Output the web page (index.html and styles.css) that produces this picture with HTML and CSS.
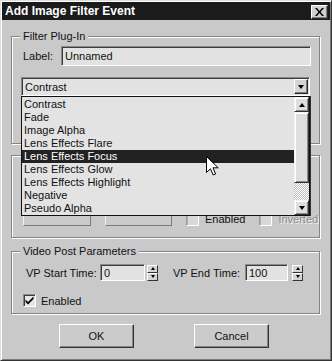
FILE: index.html
```html
<!DOCTYPE html>
<html lang="en">
<head>
    <meta charset="UTF-8">
    <title>Add Image Filter Event</title>
    <link rel="stylesheet" href="styles.css">
</head>
<body>
    <div class="dialog">
        <div class="titlebar">
            <span class="title">Add Image Filter Event</span>
            <button class="close" aria-label="Close">
                <svg width="9" height="8" viewBox="0 0 9 8"><path d="M0 0h2l2.5 3 2.5-3h2L5.5 4 9 8H7L4.5 5 2 8H0l3.5-4z" fill="#000"/></svg>
            </button>
        </div>
        <div class="dialog-body">
            <div class="group group-plugin">
                <div class="group-title">Filter Plug-In</div>
                <div class="label-row">
                    <span class="label">Label:</span>
                    <div class="field field-label">Unnamed</div>
                </div>
                <div class="combo-wrap">
                    <div class="combo">
                        <div class="combo-value">Contrast</div>
                        <div class="combo-btn"><span class="tri-down"></span></div>
                    </div>
                    <div class="combo-list">
                        <ul class="items">
                            <li>Contrast</li>
                            <li>Fade</li>
                            <li>Image Alpha</li>
                            <li>Lens Effects Flare</li>
                            <li class="selected">Lens Effects Focus</li>
                            <li>Lens Effects Glow</li>
                            <li>Lens Effects Highlight</li>
                            <li>Negative</li>
                            <li>Pseudo Alpha</li>
                        </ul>
                        <div class="scrollbar">
                            <div class="sb-btn"><span class="tri-up"></span></div>
                            <div class="sb-thumb"></div>
                            <div class="sb-track"></div>
                            <div class="sb-btn"><span class="tri-down"></span></div>
                        </div>
                    </div>
                    <svg class="cursor" width="13" height="20" viewBox="0 0 13 20">
                        <path d="M0.5 0.5V16.5L4.5 12.8L7.2 19L9.6 18L7 11.8H12.2Z" fill="#fff" stroke="#000" stroke-width="1" stroke-linejoin="miter"/>
                    </svg>
                </div>
            </div>

            <div class="group group-control">
                <button class="btn btn-small" disabled></button>
                <button class="btn btn-small btn-setup" disabled></button>
                <span class="check check-light check-enabled"></span>
                <span class="check-text">Enabled</span>
                <span class="check check-light check-inverted"></span>
                <span class="check-text disabled-text">Inverted</span>
            </div>

            <div class="group group-vp">
                <div class="group-title">Video Post Parameters</div>
                <div class="vp-row">
                    <span class="vp-label vp-start">VP Start Time:</span>
                    <div class="field field-spin field-start">0</div>
                    <div class="spinner"><span class="spin-btn"><span class="tri-up small"></span></span><span class="spin-btn"><span class="tri-down small"></span></span></div>
                    <span class="vp-label vp-end">VP End Time:</span>
                    <div class="field field-spin field-end">100</div>
                    <div class="spinner spinner-end"><span class="spin-btn"><span class="tri-up small"></span></span><span class="spin-btn"><span class="tri-down small"></span></span></div>
                </div>
                <div class="check-row">
                    <span class="check">
                        <svg width="9" height="9" viewBox="0 0 9 9"><path d="M0.5 3.5L3 6L8.5 0.5V3L3 8.5L0.5 6Z" fill="#000"/></svg>
                    </span>
                    <span class="check-text">Enabled</span>
                </div>
            </div>

            <div class="actions">
                <button class="btn btn-action">OK</button>
                <button class="btn btn-action btn-cancel">Cancel</button>
            </div>
        </div>
    </div>
</body>
</html>
```

FILE: styles.css
```css
* {
    box-sizing: border-box;
}
body {
    margin: 0;
    background: #c9c9c9;
    color: #111;
    font-family: "Liberation Sans", Arial, sans-serif;
    font-size: 11px;
}
.dialog {
    width: 332px;
    height: 361px;
    padding: 1px;
    background: #c9c9c9;
    border: 1px solid;
    border-color: #dedede #333 #333 #dedede;
    box-shadow: inset 1px 1px 0 #fff, inset -1px -1px 0 #7c7c7c;
    display: flex;
    flex-direction: column;
}

/* title bar */
.titlebar {
    height: 18px;
    padding: 0 2px 0 3px;
    background: #1b1b1b;
    display: flex;
    align-items: center;
    justify-content: space-between;
}
.title {
    color: #fff;
    font-weight: bold;
    font-size: 12px;
}
.close {
    width: 17px;
    height: 14px;
    margin-top: 2px;
    padding: 0;
    background: #d0d0d0;
    border: 1px solid;
    border-color: #fff #2a2a2a #2a2a2a #fff;
    box-shadow: inset -1px -1px 0 #7c7c7c;
    display: flex;
    align-items: center;
    justify-content: center;
}

.dialog-body {
    flex: 1;
    padding: 16px 10px 0 9px;
    display: flex;
    flex-direction: column;
}

/* group boxes */
.group {
    position: relative;
    border: 1px solid #848484;
    box-shadow: inset 1px 1px 0 #fff, 1px 1px 0 #fff;
}
.group-title {
    position: absolute;
    top: -7px;
    left: 8px;
    padding: 0 3px;
    line-height: 13px;
    background: #c9c9c9;
}
.group-plugin {
    height: 108px;
    padding: 9px 8px 0 9px;
}
.group-control {
    height: 83px;
    margin-top: 11px;
    padding: 0 0 11px 11px;
    display: flex;
    align-items: flex-end;
}
.group-vp {
    height: 63px;
    margin-top: 13px;
    padding: 12px 0 0 11px;
}

/* inputs */
.field {
    background: #e2e2e2;
    border: 1px solid;
    border-color: #8a8a8a #fff #fff #8a8a8a;
    box-shadow: inset 1px 1px 0 #3c3c3c;
    display: flex;
    align-items: center;
    padding-left: 3px;
    color: #111;
}
.label-row {
    height: 20px;
    display: flex;
    align-items: center;
}
.label {
    width: 38px;
    margin-left: 2px;
}
.field-label {
    flex: 1;
    height: 20px;
}

/* combo box */
.combo-wrap {
    position: relative;
    margin-top: 11px;
    margin-right: 1px;
}
.combo {
    height: 19px;
    background: #e2e2e2;
    border: 1px solid;
    border-color: #8a8a8a #fff #fff #8a8a8a;
    box-shadow: inset 1px 1px 0 #3c3c3c;
    display: flex;
    align-items: center;
}
.combo-value {
    flex: 1;
    padding-left: 3px;
}
.combo-btn {
    width: 14px;
    height: 15px;
    margin-right: 1px;
    background: #d4d4d4;
    border: 1px solid;
    border-color: #fff #2a2a2a #2a2a2a #fff;
    box-shadow: inset -1px -1px 0 #7c7c7c;
    display: flex;
    align-items: center;
    justify-content: center;
}
.tri-down,
.tri-up {
    width: 0;
    height: 0;
    border-left: 3.5px solid transparent;
    border-right: 3.5px solid transparent;
}
.tri-down {
    border-top: 4px solid #000;
}
.tri-up {
    border-bottom: 4px solid #000;
}
.tri-down.small,
.tri-up.small {
    border-left-width: 2.5px;
    border-right-width: 2.5px;
    border-top-width: 3px;
    border-bottom-width: 3px;
}

.combo-list {
    position: absolute;
    top: 100%;
    left: 0;
    right: 0;
    height: 120px;
    z-index: 2;
    background: #e3e3e3;
    border: 1px solid #111;
    box-shadow: 1px 0 0 #333;
    display: flex;
}
.items {
    flex: 1;
    margin: 0;
    padding: 1px 0 0;
    list-style: none;
}
.items li {
    height: 13px;
    line-height: 13px;
    padding-left: 2px;
    white-space: nowrap;
}
.items li.selected {
    background: #222;
    color: #fff;
}
.scrollbar {
    width: 15px;
    display: flex;
    flex-direction: column;
}
.sb-btn,
.sb-thumb {
    background: #dedede;
    border: 1px solid;
    border-color: #f4f4f4 #333 #333 #f4f4f4;
    box-shadow: inset 1px 1px 0 #fff, inset -1px -1px 0 #8a8a8a;
}
.sb-btn {
    height: 15px;
    display: flex;
    align-items: center;
    justify-content: center;
}
.sb-thumb {
    height: 71px;
}
.sb-track {
    flex: 1;
    background: repeating-conic-gradient(#fff 0 25%, #bdbdbd 0 50%) 0 0 / 2px 2px;
}
.cursor {
    position: absolute;
    left: 185px;
    top: 79px;
    z-index: 3;
}

/* buttons */
.btn {
    padding: 0;
    background: #cbcbcb;
    border: 1px solid;
    border-color: #fff #333 #333 #fff;
    box-shadow: inset -1px -1px 0 #858585;
    font-family: "Liberation Sans", Arial, sans-serif;
    font-size: 11px;
    color: #111;
}
.btn-small {
    width: 68px;
    height: 23px;
    border-color: #f2f2f2 #7a7a7a #7a7a7a #f2f2f2;
    box-shadow: none;
}
.btn-setup {
    width: 67px;
    margin-left: 14px;
}
.actions {
    margin-top: 10px;
    padding-left: 48px;
    display: flex;
}
.btn-action {
    width: 75px;
    height: 24px;
}
.btn-cancel {
    margin-left: 60px;
}

/* check boxes */
.check {
    flex: none;
    width: 13px;
    height: 13px;
    background: #e6e6e6;
    border: 1px solid;
    border-color: #8a8a8a #fff #fff #8a8a8a;
    box-shadow: inset 1px 1px 0 #3c3c3c;
    display: flex;
    align-items: center;
    justify-content: center;
}
.check-light {
    background: #d8d8d8;
    border-color: #9a9a9a #fff #fff #9a9a9a;
    box-shadow: inset 1px 1px 0 #b0b0b0;
}
.check-enabled {
    margin-left: 14px;
}
.check-inverted {
    margin-left: 14px;
}
.group-control .check-text {
    margin-left: 6px;
    line-height: 13px;
}
.disabled-text {
    color: #8c8c8c;
    text-shadow: 1px 1px 0 #f2f2f2;
}

/* video post */
.vp-row {
    height: 17px;
    display: flex;
    align-items: center;
}
.vp-label {
    flex: none;
    white-space: nowrap;
}
.vp-start {
    width: 74px;
    margin-left: 3px;
}
.vp-end {
    width: 72px;
    margin-left: 15px;
}
.field-spin {
    flex: none;
    height: 17px;
}
.field-start {
    width: 45px;
}
.field-end {
    width: 43px;
}
.spinner {
    flex: none;
    width: 11px;
    height: 16px;
    margin-left: 2px;
    display: flex;
    flex-direction: column;
}
.spinner-end {
    margin-left: 4px;
}
.spin-btn {
    flex: 1;
    background: #d4d4d4;
    border: 1px solid;
    border-color: #fff #333 #333 #fff;
    display: flex;
    align-items: center;
    justify-content: center;
}
.check-row {
    margin-top: 13px;
    display: flex;
    align-items: center;
}
.check-row .check-text {
    margin-left: 5px;
}
```
